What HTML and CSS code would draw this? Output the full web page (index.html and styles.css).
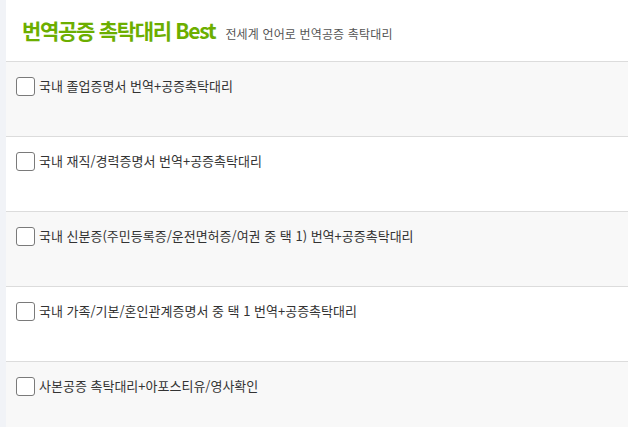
FILE: index.html
```html
<!DOCTYPE html>
<html lang="ko">
<head>
<meta charset="utf-8">
<link rel="stylesheet" href="styles.css">
</head>
<body>
<div class="page">
  <div class="side"></div>
  <div class="main">
    <div class="head">
      <h1 class="title">번역공증 촉탁대리 Best</h1>
      <span class="sub">전세계 언어로 번역공증 촉탁대리</span>
    </div>
    <ul class="list">
      <li class="row alt"><label class="item"><span class="box"></span><span class="txt">국내 졸업증명서 번역+공증촉탁대리</span></label></li>
      <li class="row"><label class="item"><span class="box"></span><span class="txt">국내 재직/경력증명서 번역+공증촉탁대리</span></label></li>
      <li class="row alt"><label class="item"><span class="box"></span><span class="txt">국내 신분증(주민등록증/운전면허증/여권 중 택 1) 번역+공증촉탁대리</span></label></li>
      <li class="row"><label class="item"><span class="box"></span><span class="txt">국내 가족/기본/혼인관계증명서 중 택 1 번역+공증촉탁대리</span></label></li>
      <li class="row alt"><label class="item"><span class="box"></span><span class="txt">사본공증 촉탁대리+아포스티유/영사확인</span></label></li>
    </ul>
  </div>
</div>
</body>
</html>
```

FILE: styles.css
```css
html, body {
  margin: 0;
  padding: 0;
  background: #fff;
  font-family: "Noto Sans CJK KR", "Noto Sans", sans-serif;
}
.page {
  display: flex;
  min-height: 427px;
}
.side {
  width: 6px;
  flex: none;
  background: #f1f3f7;
}
.main {
  flex: 1;
  min-width: 0;
}
.head {
  height: 62px;
  display: flex;
  align-items: baseline;
  padding: 15px 0 0 16px;
  box-sizing: border-box;
  border-bottom: 1px solid #dcdcdc;
}
.title {
  margin: 0;
  font-size: 21px;
  font-weight: 700;
  letter-spacing: -1.3px;
  color: #6cae00;
  line-height: 30px;
}
.sub {
  margin-left: 10px;
  font-size: 12px;
  letter-spacing: 0.15px;
  color: #555;
}
.list {
  list-style: none;
  margin: 0;
  padding: 0;
}
.row {
  height: 74px;
  border-bottom: 1px solid #dcdcdc;
  background: #fff;
}
.row.alt {
  background: #f8f8f8;
}
.item {
  display: flex;
  align-items: center;
  padding: 14px 0 0 10px;
  gap: 4px;
}
.box {
  width: 17px;
  height: 17px;
  border: 1.5px solid #7a7a7a;
  border-radius: 3px;
  background: #fff;
  flex: none;
}
.txt {
  font-size: 13px;
  letter-spacing: 0;
  color: #333;
  line-height: 20px;
}
```
